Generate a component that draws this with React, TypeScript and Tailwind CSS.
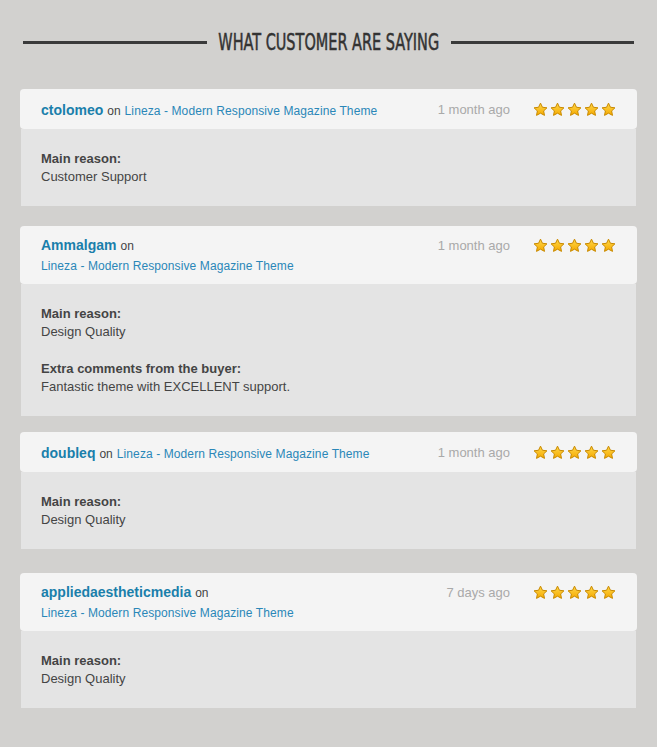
import React from "react";

interface Review {
  user: string;
  item: string;
  time: string;
  wrap: boolean;
  blocks: { title: string; text: string }[];
  mt: string;
}

const reviews: Review[] = [
  {
    user: "ctolomeo",
    item: "Lineza - Modern Responsive Magazine Theme",
    time: "1 month ago",
    wrap: false,
    blocks: [{ title: "Main reason:", text: "Customer Support" }],
    mt: "mt-0",
  },
  {
    user: "Ammalgam",
    item: "Lineza - Modern Responsive Magazine Theme",
    time: "1 month ago",
    wrap: true,
    blocks: [
      { title: "Main reason:", text: "Design Quality" },
      { title: "Extra comments from the buyer:", text: "Fantastic theme with EXCELLENT support." },
    ],
    mt: "mt-5",
  },
  {
    user: "doubleq",
    item: "Lineza - Modern Responsive Magazine Theme",
    time: "1 month ago",
    wrap: false,
    blocks: [{ title: "Main reason:", text: "Design Quality" }],
    mt: "mt-[16px]",
  },
  {
    user: "appliedaestheticmedia",
    item: "Lineza - Modern Responsive Magazine Theme",
    time: "7 days ago",
    wrap: true,
    blocks: [{ title: "Main reason:", text: "Design Quality" }],
    mt: "mt-[24px]",
  },
];

function Star() {
  return (
    <svg width="15" height="15" viewBox="0 0 24 24">
      <defs>
        <linearGradient id="sg" x1="0" y1="0" x2="0" y2="1">
          <stop offset="0" stopColor="#ffd84a" />
          <stop offset="1" stopColor="#f5a900" />
        </linearGradient>
      </defs>
      <path
        d="M12 1.8l3.1 6.6 7.2.9-5.3 5 1.4 7.1L12 17.9l-6.4 3.5 1.4-7.1-5.3-5 7.2-.9z"
        fill="url(#sg)"
        stroke="#c98a00"
        strokeWidth="1.6"
        strokeLinejoin="round"
      />
    </svg>
  );
}

function Stars() {
  return (
    <div className="flex gap-[2px]">
      {[0, 1, 2, 3, 4].map((i) => (
        <Star key={i} />
      ))}
    </div>
  );
}

function ReviewCard({ r }: { r: Review }) {
  const link = <span className="text-[12px] leading-[19px] tracking-[0.1px] text-[#2a87b8]">{r.item}</span>;
  return (
    <div className={r.mt}>
      <div
        className={`flex items-start justify-between rounded-[4px] bg-[#f4f4f4] pl-[21px] pr-[21px] ${
          r.wrap ? "pt-[10px] pb-[10px]" : "pt-[11px] pb-[10px]"
        }`}
      >
        <div className="leading-[19px]">
          <div className="flex h-[19px] items-baseline">
            <span className="text-[14px] font-bold leading-[19px] text-[#1a7fab]">{r.user}</span>
            <span className="ml-[4px] text-[12px] leading-[19px] text-[#444]">on</span>
            {!r.wrap && <span className="ml-[4px]">{link}</span>}
          </div>
          {r.wrap && <div className="h-[19px]">{link}</div>}
        </div>
        <div className="flex h-[19px] items-center">
          <span className="text-[13px] leading-[19px] text-[#a9a9a9]">{r.time}</span>
          <div className="ml-[23px]">
            <Stars />
          </div>
        </div>
      </div>
      <div className="mx-px bg-[#e4e4e4] px-5 pt-[21px] pb-[20px] text-[13px] leading-[18px] text-[#444]">
        {r.blocks.map((b, i) => (
          <div key={i} className={i > 0 ? "mt-[19px]" : ""}>
            <div className="font-bold">{b.title}</div>
            <div>{b.text}</div>
          </div>
        ))}
      </div>
    </div>
  );
}

export default function App() {
  return (
    <div
      className="min-h-[747px] bg-[#d2d1cf] px-5 pb-10"
      style={{ fontFamily: '"Liberation Sans", Arial, sans-serif' }}
    >
      <div className="flex items-center gap-3 pt-[30px] pb-[35px] px-[3px]">
        <div className="h-[3px] flex-1 bg-[#3a3a3a]" />
        <div className="flex w-[220px] justify-center">
          <h2
            className="origin-center scale-x-[0.7] whitespace-nowrap text-[23px] leading-[24px] text-[#333] [-webkit-text-stroke:0.5px_#333]"
            style={{ fontFamily: '"DejaVu Sans Condensed", "DejaVu Sans", sans-serif' }}
          >
            WHAT CUSTOMER ARE SAYING
          </h2>
        </div>
        <div className="h-[3px] flex-1 bg-[#3a3a3a]" />
      </div>
      {reviews.map((r) => (
        <ReviewCard key={r.user} r={r} />
      ))}
    </div>
  );
}
